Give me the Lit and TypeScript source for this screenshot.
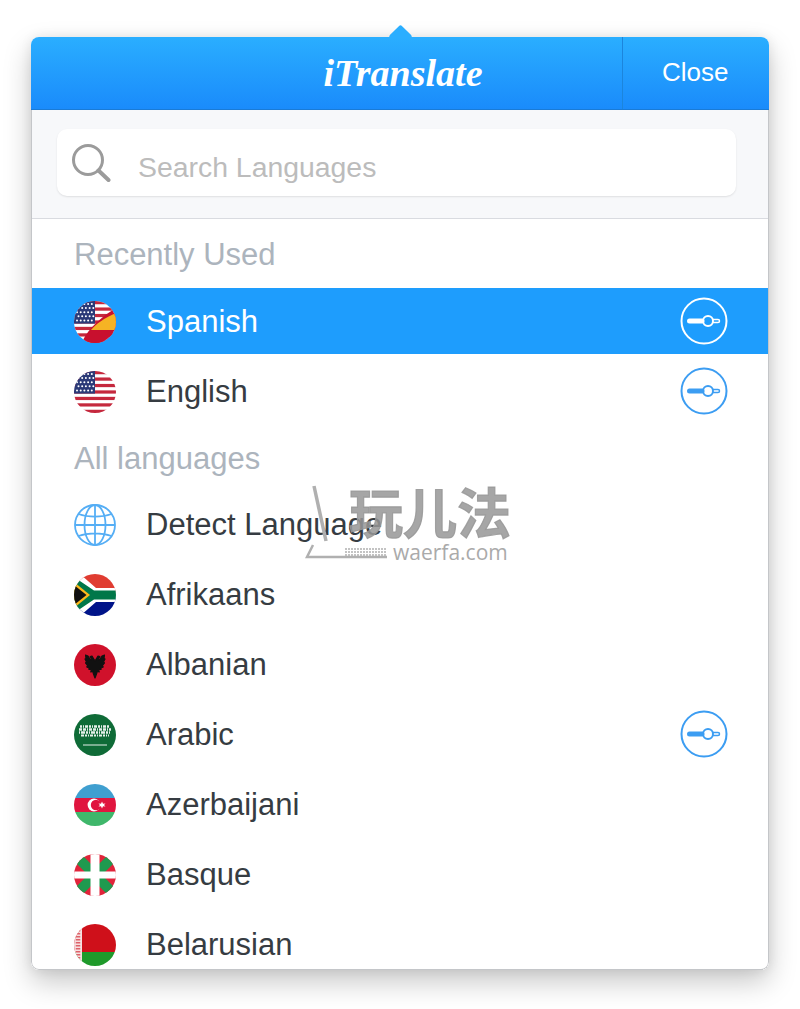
import { LitElement, css, html, svg } from "lit";
import { customElement } from "lit/decorators.js";

const usFlag = () => {
  const stripes = [];
  for (let i = 0; i < 7; i += 1) {
    stripes.push(svg`<rect x="0" y=${i * 6.46} width="42" height="3.23" fill="#c5283d" />`);
  }
  const stars = [];
  for (let y = 0; y < 5; y += 1) {
    for (let x = 0; x < 5; x += 1) {
      stars.push(svg`<circle cx=${3 + x * 3.7 + (y % 2) * 1.5} cy=${3 + y * 4.1} r="1" fill="#fff" />`);
    }
  }
  return svg`
    <rect width="42" height="42" fill="#fff" />
    ${stripes}
    <rect width="21" height="22.6" fill="#2b3a78" />
    ${stars}
  `;
};

// left half of the eagle, top centre to tail; the right half is its mirror
const EAGLE_HALF = [
  [21, 17], [19.5, 14.5], [18, 12], [16.2, 12.5], [17.5, 15], [16.5, 16],
  [14, 12], [11.5, 11], [12, 14.5], [11, 15], [12.5, 18], [11.5, 19],
  [13.5, 21.5], [12.8, 23], [15, 24], [15, 25.5], [17.3, 25.5], [16.8, 28],
  [18.8, 27.5], [19.5, 30], [21, 34],
];
const EAGLE = [
  ...EAGLE_HALF,
  ...EAGLE_HALF.slice(1, -1).reverse().map(([x, y]) => [42 - x, y]),
]
  .map(([x, y]) => `${x},${y}`)
  .join(" ");

const FLAGS: Record<string, () => unknown> = {
  mixed: () => svg`
    ${usFlag()}
    <path d="M9 39 C15 27 27 16 42 7 V42 H9 Z" fill="#c8102e" />
    <path d="M17 29 C22 23 30 17 42 12 V29 Z" fill="#f5b324" />
  `,
  us: usFlag,
  za: () => svg`
    <rect width="42" height="21" fill="#e03c31" />
    <rect y="21" width="42" height="21" fill="#001489" />
    <path d="M6 0 L22 14 H42 V28 H22 L6 42 H0 V0 Z" fill="#fff" />
    <path d="M0 3 L20 16.5 H42 V25.5 H20 L0 39 Z" fill="#007749" />
    <path d="M0 8 L16 21 L0 34 Z" fill="#ffb81c" />
    <path d="M0 11 L12.5 21 L0 31 Z" fill="#111" />
  `,
  al: () => svg`
    <rect width="42" height="42" fill="#d0112b" />
    <polygon points=${EAGLE} fill="#111" stroke="#111" stroke-width="1.2" stroke-linejoin="round" />
  `,
  sa: () => svg`
    <rect width="42" height="42" fill="#0f6b37" />
    <g stroke="#e6f0ea" fill="none">
      <path d="M6 12.5 H36" stroke-width="2.4" stroke-dasharray="2 1 1 1 3 1" />
      <path d="M5 15.5 H37" stroke-width="2.6" stroke-dasharray="3 1 3 1 1 1" />
      <path d="M5 18.5 H37" stroke-width="2.6" stroke-dasharray="1 1 4 1 2 1" />
      <path d="M7 21.5 H35" stroke-width="2" stroke-dasharray="3 1 2 1 1 1" />
      <path d="M9 31 H33" stroke-width="1.2" />
    </g>
  `,
  az: () => svg`
    <rect width="42" height="14" fill="#3f9fd0" />
    <rect y="14" width="42" height="14" fill="#e0153f" />
    <rect y="28" width="42" height="14" fill="#3fb76b" />
    <circle cx="20" cy="21" r="6.4" fill="#fff" />
    <circle cx="22" cy="21" r="5.2" fill="#e0153f" />
    <path d="M28 17.5 L29 19.8 L31.5 19.5 L30 21 L31.5 22.5 L29 22.2 L28 24.5 L27 22.2 L24.5 22.5 L26 21 L24.5 19.5 L27 19.8 Z" fill="#fff" />
  `,
  eu: () => svg`
    <rect width="42" height="42" fill="#e0243a" />
    <path d="M0 0 L42 42 M42 0 L0 42" stroke="#1f9a4f" stroke-width="10" />
    <path d="M21 0 V42" stroke="#fff" stroke-width="9" />
    <path d="M0 21 H42" stroke="#fff" stroke-width="7" />
  `,
  by: () => svg`
    <rect width="42" height="28" fill="#cf101a" />
    <rect y="28" width="42" height="14" fill="#1f9a2b" />
    <rect width="8" height="42" fill="#f6dfe0" />
    <path d="M4 0 V42" stroke="#cf101a" stroke-width="4.5" stroke-dasharray="1.5 1.5" opacity="0.6" />
  `,
};

const globe = svg`
  <g fill="none" stroke="#55aef5" stroke-width="1.8">
    <circle cx="21" cy="21" r="20" />
    <ellipse cx="21" cy="21" rx="10.5" ry="20" />
    <path d="M21 1 V41 M1 21 H41 M4.5 10 C14 13.5 28 13.5 37.5 10 M4.5 32 C14 28.5 28 28.5 37.5 32" />
  </g>
`;

interface Lang {
  name: string;
  flag: string;
  toggle?: boolean;
  selected?: boolean;
}

const RECENT: Lang[] = [
  { name: "Spanish", flag: "mixed", toggle: true, selected: true },
  { name: "English", flag: "us", toggle: true },
];

const ALL: Lang[] = [
  { name: "Detect Language", flag: "globe" },
  { name: "Afrikaans", flag: "za" },
  { name: "Albanian", flag: "al" },
  { name: "Arabic", flag: "sa", toggle: true },
  { name: "Azerbaijani", flag: "az" },
  { name: "Basque", flag: "eu" },
  { name: "Belarusian", flag: "by" },
];

@customElement("app-root")
export class AppRoot extends LitElement {
  private renderFlag(flag: string) {
    if (flag === "globe") {
      return html`<svg class="flag plain" viewBox="0 0 42 42">${globe}</svg>`;
    }
    return html`<svg class="flag" viewBox="0 0 42 42">${FLAGS[flag]()}</svg>`;
  }

  private renderToggle() {
    return html`
      <svg class="toggle" viewBox="0 0 48 48">
        <g fill="none" stroke="currentColor">
          <circle cx="24" cy="24" r="22.5" stroke-width="2" />
          <path d="M9.5 24 H22" stroke-width="5" stroke-linecap="round" />
          <path d="M32 22.5 H38 A1.5 1.5 0 0 1 38 25.5 H32" stroke-width="1.5" />
          <circle cx="28" cy="24" r="5" stroke-width="2" />
        </g>
      </svg>
    `;
  }

  private renderRow(lang: Lang) {
    return html`
      <div class="row ${lang.selected ? "selected" : ""} ${lang.name === "English" ? "tall" : ""}">
        ${this.renderFlag(lang.flag)}
        <span class="name">${lang.name}</span>
        ${lang.toggle ? this.renderToggle() : ""}
      </div>
    `;
  }

  render() {
    return html`
      <div class="popover">
        <div class="caret"></div>
        <div class="card">
          <header class="header">
            <span></span>
            <span class="logo">iTranslate</span>
            <span class="close">Close</span>
          </header>
          <div class="body">
            <div class="search-area">
              <div class="search">
                <svg class="search-icon" viewBox="0 0 40 40">
                  <g fill="none" stroke="#9b9b9b">
                    <circle cx="17" cy="17" r="14.5" stroke-width="3" />
                    <path d="M27.5 27.5 L37.5 37" stroke-width="4" stroke-linecap="round" />
                  </g>
                </svg>
                <span class="placeholder">Search Languages</span>
              </div>
            </div>
            <div class="heading first">Recently Used</div>
            ${RECENT.map((lang) => this.renderRow(lang))}
            <div class="heading">All languages</div>
            ${ALL.map((lang) => this.renderRow(lang))}
          </div>
        </div>
        <svg class="mark" width="220" height="110" viewBox="0 0 220 110">
          <g fill="none" stroke="#b0b0b0">
            <path d="M9 21 L21 76" stroke-width="3.5" />
            <path d="M8 80 L2 92 H82" stroke-width="2.5" />
            <path d="M40 84 H81 M40 87 H81 M40 90 H81" stroke-width="1.6" stroke-dasharray="2 1" />
          </g>
          <text class="mark-cjk" x="44" y="69">玩儿法</text>
          <text class="mark-latin" x="88" y="95">waerfa.com</text>
        </svg>
      </div>
    `;
  }

  static styles = css`
    :host {
      display: block;
      height: 1009px;
      background: #fff;
      font-family: "Liberation Sans", Arial, sans-serif;
      overflow: hidden;
    }

    .popover {
      position: relative;
      box-sizing: border-box;
      width: 738px;
      height: 933px;
      margin: 37px 0 0 31px;
      border-radius: 8px;
      box-shadow:
        0 12px 28px rgba(0, 0, 0, 0.22),
        0 0 12px rgba(0, 0, 0, 0.08);
    }

    .caret {
      position: absolute;
      top: -9px;
      left: 361px;
      width: 17px;
      height: 17px;
      background: #2aaeff;
      border-radius: 2px;
      transform: rotate(45deg);
    }

    .card {
      position: relative;
      height: 100%;
      border-radius: 8px;
      overflow: hidden;
      background: #fff;
    }

    .header {
      display: grid;
      grid-template-columns: 1fr auto 1fr;
      align-items: stretch;
      box-sizing: border-box;
      height: 73px;
      border-bottom: 1px solid #1a7bd6;
      background: linear-gradient(#2aaeff, #1a8bfb);
      color: #fff;
    }

    .logo {
      align-self: center;
      margin-left: 6px;
      font-family: "Liberation Serif", serif;
      font-style: italic;
      font-weight: 700;
      font-size: 38px;
    }

    .close {
      justify-self: end;
      box-sizing: border-box;
      width: 147px;
      padding: 20px 0 0 39px;
      border-left: 1px solid #1c85dc;
      font-size: 26px;
    }

    .body {
      box-sizing: border-box;
      height: 860px;
      overflow: hidden;
      border: 1px solid #c4c6c9;
      border-top: 0;
      border-radius: 0 0 8px 8px;
    }

    .search-area {
      box-sizing: border-box;
      height: 109px;
      padding: 19px 32px 0 25px;
      background: #f7f8fa;
      border-bottom: 1px solid #d9dbe0;
    }

    .search {
      display: flex;
      align-items: center;
      height: 67px;
      padding-left: 14px;
      background: #fff;
      border-radius: 10px;
      box-shadow: 0 1px 2px rgba(0, 0, 0, 0.1);
    }

    .search-icon {
      width: 40px;
      height: 40px;
      margin-right: 27px;
    }

    .placeholder {
      margin-top: 9px;
      font-size: 28.4px;
      color: #bcbcbc;
    }

    .heading {
      display: flex;
      align-items: center;
      box-sizing: border-box;
      height: 61px;
      padding-left: 42px;
      font-size: 31px;
      color: #acb4bd;
    }

    .heading.first {
      height: 69px;
      padding-top: 3px;
    }

    .row {
      display: flex;
      align-items: center;
      height: 70px;
      padding: 0 40px 0 42px;
      color: #363c42;
      font-size: 31px;
    }

    .row.selected {
      height: 66px;
      background: #1e9dfd;
      color: #fff;
    }

    .row.tall {
      height: 74px;
    }

    .flag {
      flex: none;
      width: 42px;
      height: 42px;
      margin: 2px 30px 0 0;
      border-radius: 50%;
    }

    .flag.plain {
      border-radius: 0;
    }

    .name {
      flex: 1;
      margin-top: 2px;
    }

    .toggle {
      flex: none;
      width: 48px;
      height: 48px;
      color: #3c9df2;
    }

    .selected .toggle {
      color: #fff;
    }

    .mark {
      position: absolute;
      left: 274px;
      top: 428px;
      pointer-events: none;
    }

    .mark-cjk {
      font-family: "Noto Sans CJK SC", sans-serif;
      font-weight: 700;
      font-size: 54px;
      fill: rgba(150, 150, 150, 0.85);
      stroke: rgba(150, 150, 150, 0.85);
      stroke-width: 1.2px;
    }

    .mark-latin {
      font-family: "Open Sans", sans-serif;
      font-size: 21px;
      fill: #aaa;
    }
  `;
}

declare global {
  interface HTMLElementTagNameMap {
    "app-root": AppRoot;
  }
}
